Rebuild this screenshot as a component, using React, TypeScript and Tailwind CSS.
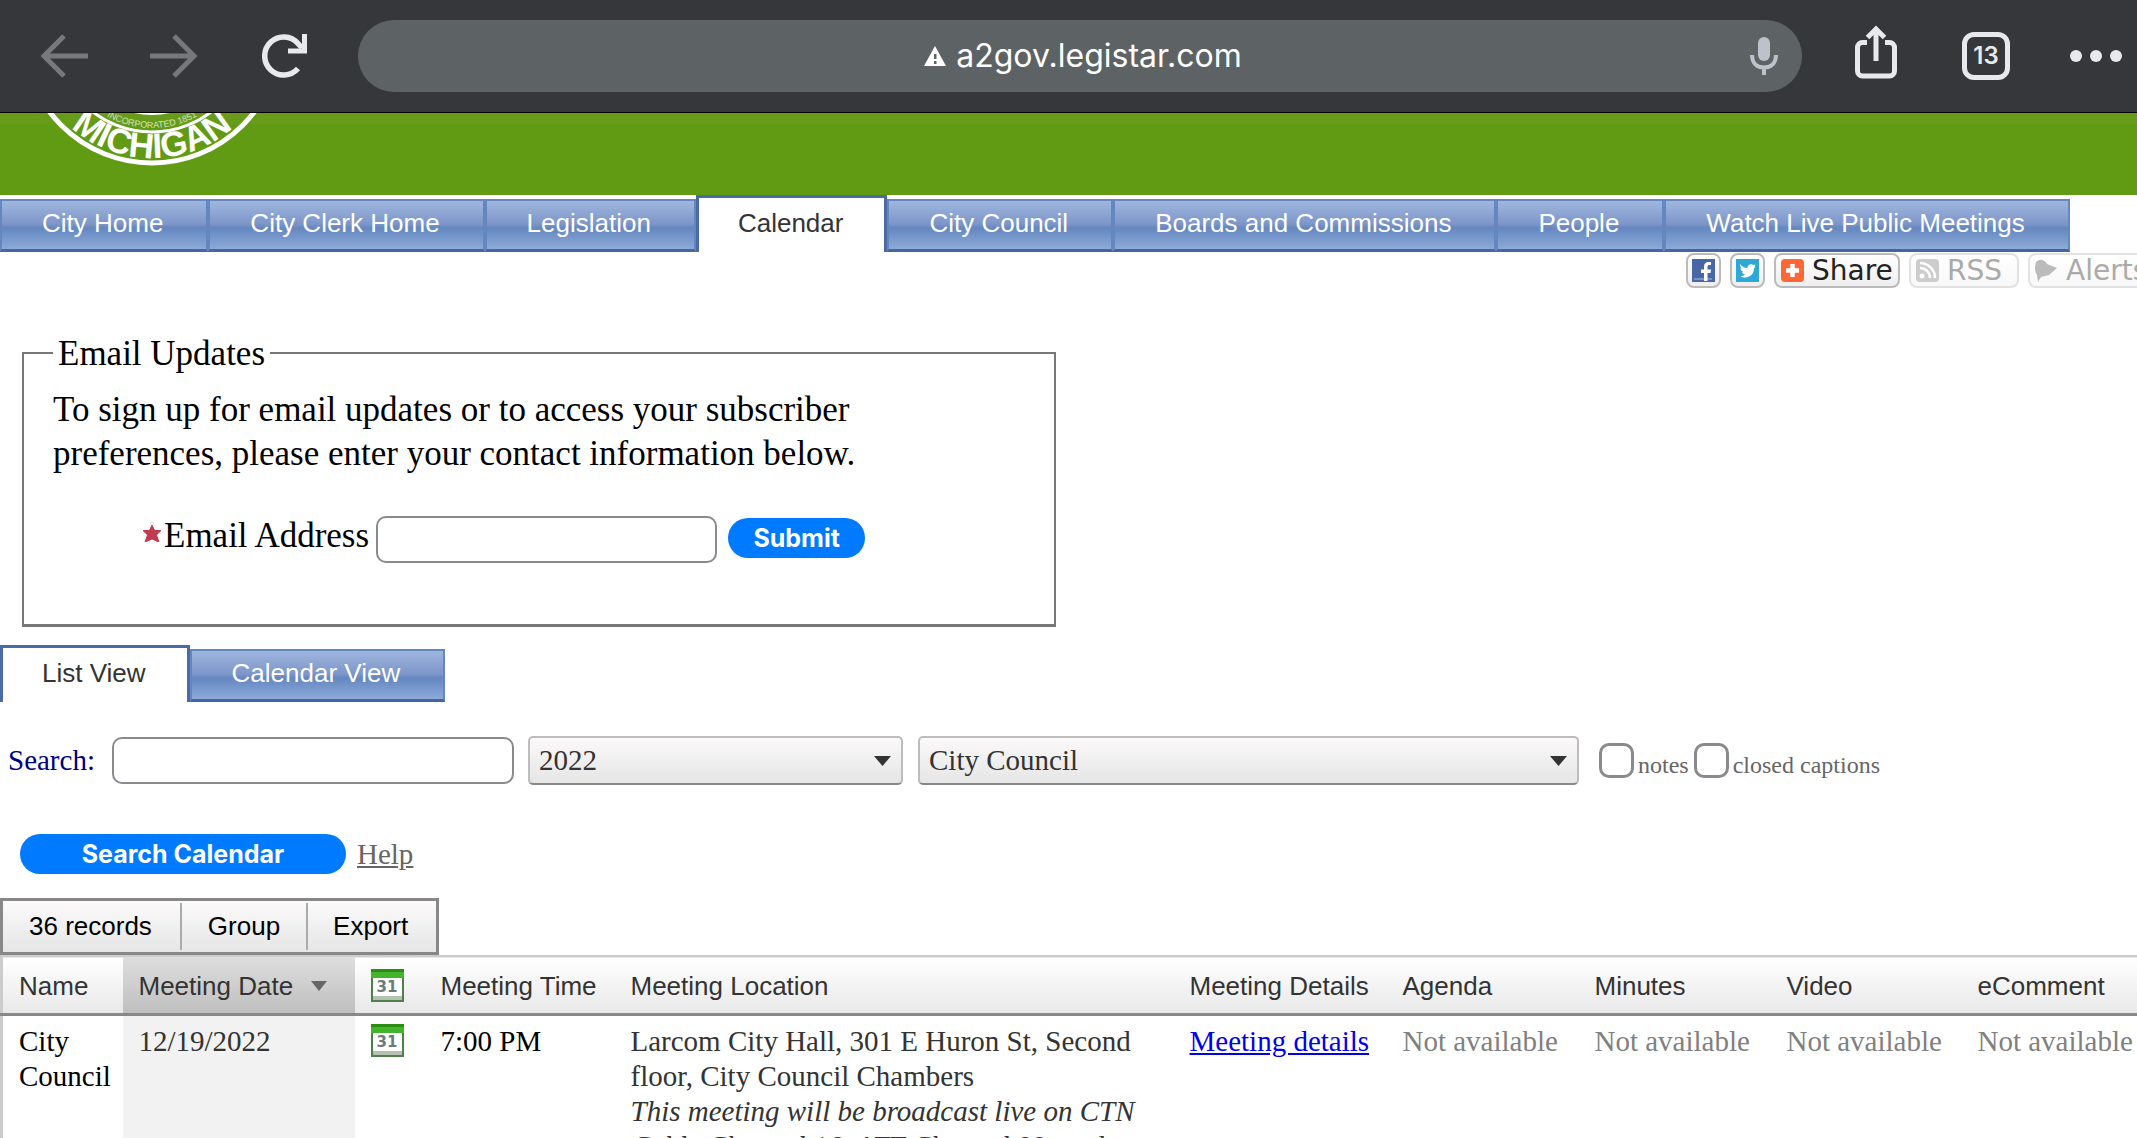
import { clsx } from "clsx";

const navTabs = [
  { label: "City Home" },
  { label: "City Clerk Home" },
  { label: "Legislation" },
  { label: "Calendar", active: true },
  { label: "City Council" },
  { label: "Boards and Commissions" },
  { label: "People" },
  { label: "Watch Live Public Meetings" },
];

const viewTabs = [
  { label: "List View", active: true },
  { label: "Calendar View" },
];

const sans = "font-['Liberation_Sans',Arial,sans-serif]";

function Tab({ label, active }: { label: string; active?: boolean }) {
  return (
    <a
      href="#"
      className={clsx(
        "block text-[26px] leading-[30px] whitespace-nowrap",
        active
          ? "border-x-3 border-t-3 border-[#4a6ba6] bg-white pt-[10px] pr-[41px] pb-[14px] pl-[39px] text-[#333]"
          : "mt-1 border-x-2 border-t-2 border-b-3 border-x-[#6587bf] border-t-[#6587bf] border-b-[#44659f] bg-[linear-gradient(#9fb6de,#7d96c9_48%,#6587c0_56%,#8cabd9)] pt-[7px] pr-[43px] pb-[11px] pl-[40px] text-white"
      )}
    >
      {label}
    </a>
  );
}

function BrowserBar() {
  return (
    <header className="flex h-[113px] items-center border-b border-black bg-[#36373b] pr-[15px] pl-[40px]">
      <button aria-label="Back" className="mr-[62px]">
        <svg width="48" height="44" viewBox="0 0 48 44" fill="none" stroke="#77787a" strokeWidth="5">
          <path d="M48 22H4M24 2L4 22l20 20" />
        </svg>
      </button>
      <button aria-label="Forward" className="mr-[64px]">
        <svg width="48" height="44" viewBox="0 0 48 44" fill="none" stroke="#77787a" strokeWidth="5">
          <path d="M0 22h44M24 2l20 20-20 20" />
        </svg>
      </button>
      <button aria-label="Reload" className="mr-[50px]">
        <svg width="46" height="46" viewBox="0 0 46 46" fill="none" stroke="#e8e9ee" strokeWidth="5.500">
          <path d="M36 35.500A19 19 0 1 1 36 10.500L40 15" />
          <path d="M42.500 1v17H26" strokeWidth="5" />
        </svg>
      </button>
      <div className="flex h-[72px] flex-1 items-center rounded-full bg-[#5d6265] pr-[24px] pl-[58px]">
        <div className="flex flex-1 items-center justify-center gap-[10px] text-white">
          <svg width="22" height="20" viewBox="0 0 22 20">
            <path d="M11 0l11 20H0z" fill="#fff" />
            <path d="M10 8h2.500v5H10zM10 15h2.500v3H10z" fill="#5d6265" />
          </svg>
          <span className="font-[Inter,Roboto,sans-serif] text-[32px] leading-[40px]">a2gov.legistar.com</span>
        </div>
        <button aria-label="Voice search">
          <svg width="28" height="38" viewBox="0 0 28 38" fill="none">
            <rect x="8" y="0" width="12" height="24" rx="6" fill="#bdc1c9" />
            <path d="M2 18c0 8 5 12.500 12 12.500S26 26 26 18M14 30v8" stroke="#bdc1c9" strokeWidth="4" />
          </svg>
        </button>
      </div>
      <button aria-label="Share page" className="mb-[8px] ml-[53px]">
        <svg width="42" height="54" viewBox="0 0 42 54" fill="none" stroke="#e8e9ee" strokeWidth="5">
          <path d="M12 17.500H7.500a5 5 0 0 0-5 5V46a5 5 0 0 0 5 5h27a5 5 0 0 0 5-5V22.500a5 5 0 0 0-5-5H30" />
          <path d="M21 36V4M12.500 12.500L21 4l8.500 8.500" />
        </svg>
      </button>
      <button
        aria-label="13 open tabs"
        className="ml-[65px] flex size-[48px] items-center justify-center rounded-[12px] border-5 border-[#e8e9ee] font-[Inter,sans-serif] text-[24px] font-semibold text-[#e8e9ee]"
      >
        13
      </button>
      <button aria-label="More" className="ml-[60px] flex gap-[8px]">
        <span className="size-[12px] rounded-full bg-[#e8e9ee]" />
        <span className="size-[12px] rounded-full bg-[#e8e9ee]" />
        <span className="size-[12px] rounded-full bg-[#e8e9ee]" />
      </button>
    </header>
  );
}

function Banner() {
  return (
    <div className="h-[82px] overflow-hidden bg-[linear-gradient(#669c1a_11px,#619a13_12px)] pl-[12px]">
      {/* bottom of the city seal, the rest is scrolled away */}
      <svg width="280" height="82" viewBox="12 113 280 82" fill="none">
        <circle cx="152" cy="35" r="128" stroke="#fff" strokeWidth="5" />
        <circle cx="152" cy="35" r="97" stroke="#fff" strokeWidth="3" />
        <circle cx="152" cy="35" r="79" stroke="#fff" strokeWidth="2" />
        <path id="sealOuter" d="M29 35A123 123 0 0 0 275 35" />
        <path id="sealInner" d="M59 35A93 93 0 0 0 245 35" />
        <g fill="#fff" textAnchor="middle" fontFamily="Liberation Sans, Arial, sans-serif">
          <text fontSize="35" fontWeight="700">
            <textPath href="#sealOuter" startOffset="50%">MICHIGAN</textPath>
          </text>
          <text fontSize="9" opacity="0.7">
            <textPath href="#sealInner" startOffset="50%">INCORPORATED 1851</textPath>
          </text>
        </g>
      </svg>
    </div>
  );
}

function ShareBar() {
  const pill = "flex h-[35px] items-center rounded-[8px] border-2 bg-linear-to-b from-white";
  return (
    <div className="mt-px flex h-[35px] justify-end gap-[9px] overflow-hidden font-['DejaVu_Sans',sans-serif] text-[28px] leading-[30px]">
      <a href="#" aria-label="Facebook" className={clsx(pill, "w-[35px] justify-center border-[#bbb] to-[#eee]")}>
        <svg width="23" height="23" viewBox="0 0 23 23">
          <path d="M0 0h23v23H0z" fill="#4767a8" />
          <path d="M2 20h18" stroke="#8ba0cb" strokeWidth="1.500" />
          <path d="M12 22v-8H9v-3.500h3V8c0-4 2-5.500 7-5V6c-3-.3-3.500.3-3.500 2v2.500H19L18.500 14h-3v8z" fill="#fff" />
        </svg>
      </a>
      <a href="#" aria-label="Twitter" className={clsx(pill, "w-[35px] justify-center border-[#bbb] to-[#eee]")}>
        <svg width="23" height="23" viewBox="0 0 23 23">
          <path d="M0 0h23v23H0z" fill="#2ca9d6" />
          <path
            d="M4 5c2 2.500 4.500 4 7.500 4-.5-3 3.500-5 6-3l2-.5-1 2 1 .3-1.500 1.500C18 15 14 18.500 9.500 18.500c-2 0-4-.5-5-1.500 2 0 3.500-.5 4.500-1.500-1.500-.3-2.500-1-3-2.500h1.500C5.500 12 4.500 11 4.500 9l1.500.5C4.500 8.500 3.500 6.500 4 5z"
            fill="#fff"
          />
        </svg>
      </a>
      <a href="#" className={clsx(pill, "w-[126px] gap-[8px] border-[#bbb] to-[#eee] pl-[5px] text-[#222]")}>
        <svg width="23" height="23" viewBox="0 0 23 23" className="shrink-0">
          <rect width="23" height="23" rx="4" fill="#ff6737" />
          <path d="M11.500 5v13M5 11.500h13" stroke="#fff" strokeWidth="4.500" />
        </svg>
        Share
      </a>
      <a href="#" className={clsx(pill, "w-[110px] gap-[8px] border-[#e2e2e2] to-[#f8f8f8] pl-[5px] text-[#aaa]")}>
        <svg width="23" height="23" viewBox="0 0 23 23" className="shrink-0" fill="none">
          <rect width="23" height="23" rx="4" fill="#ccc" />
          <path d="M4 9a10 10 0 0 1 10 10M4 4a15 15 0 0 1 15 15" stroke="#fff" strokeWidth="2.500" />
          <circle cx="6" cy="17" r="2.500" fill="#fff" />
        </svg>
        RSS
      </a>
      <a href="#" className={clsx(pill, "w-[109px] gap-[9px] overflow-hidden rounded-r-none border-r-0 border-[#e2e2e2] to-[#f8f8f8] pl-[5px] text-[#aaa]")}>
        <svg width="22" height="23" viewBox="0 0 22 23" className="shrink-0">
          <path d="M1 3c4-4 9-2 11 2l10 4-8 7-8 2-3 5-1-7C-1 11 0 7 1 3z" fill="#bbb" />
        </svg>
        Alerts
      </a>
    </div>
  );
}

function EmailUpdates() {
  return (
    <fieldset className="mt-[41px] ml-[22px] h-[298px] w-[1034px] max-w-full border-2 border-b-3 border-[#777] px-[29px]">
      <legend className="px-[5px] pt-[3px]">Email Updates</legend>
      <p className="mt-[12px] max-w-[900px]">
        To sign up for email updates or to access your subscriber preferences, please enter your contact information below.
      </p>
      <div className="mt-[36px] flex items-center pl-[90px]">
        <svg width="18" height="17" viewBox="0 0 18 17" className="mr-[3px] mb-[8px]">
          <path d="M9 0l2.500 5.500H18l-4.500 4.500L16 17l-7-3-7 3 2.500-7L0 5.500h6.500z" fill="#c23a50" stroke="#c23a50" />
        </svg>
        <label htmlFor="email" className="pb-[4px]">
          Email Address
        </label>
        <input id="email" type="email" className="mt-[4px] ml-[7px] h-[47px] w-[341px] rounded-[10px] border-2 border-[#8a8a8e] bg-white px-2" />
        <button className="ml-[11px] h-[40px] w-[137px] rounded-full bg-[#007aff] font-[Inter,sans-serif] text-[25px] leading-[40px] font-bold text-white">
          Submit
        </button>
      </div>
    </fieldset>
  );
}

function Dropdown({ label, value, width }: { label: string; value: string; width: string }) {
  return (
    <div className={clsx("relative", width)}>
      <select
        aria-label={label}
        className="h-[49px] w-full appearance-none rounded-[5px] border-2 border-[#bdbdbd] border-b-[#888] bg-linear-to-b from-[#fbf9fa] to-[#e6e6e6] px-[9px] text-[#333]"
      >
        <option>{value}</option>
      </select>
      <svg className="pointer-events-none absolute top-[20px] right-[12px]" width="17" height="10" viewBox="0 0 17 10">
        <path d="M0 0h17L8.500 10z" fill="#333" />
      </svg>
    </div>
  );
}

function SearchForm() {
  const box = "size-[35px] appearance-none rounded-[10px] border-3 border-[#8a8a8e] bg-white";
  return (
    <form className="text-[29px] leading-[35px]">
      <div className="mt-[34px] flex items-center">
        <label htmlFor="search" className="ml-[8px] w-[104px] text-[#000080]">
          Search:
        </label>
        <input id="search" className="h-[47px] w-[402px] rounded-[10px] border-2 border-[#8a8a8e] bg-white px-2" />
        <div className="ml-[14px] flex gap-[15px]">
          <Dropdown label="Year" value="2022" width="w-[375px]" />
          <Dropdown label="Department" value="City Council" width="w-[661px]" />
        </div>
        <div className="ml-[20px] flex items-center text-[24px] text-[#666]">
          <input id="notes" type="checkbox" className={box} />
          <label htmlFor="notes" className="mt-[10px] mr-[5px] ml-[4px]">
            notes
          </label>
          <input id="captions" type="checkbox" className={box} />
          <label htmlFor="captions" className="mt-[10px] ml-[4px]">
            closed captions
          </label>
        </div>
      </div>
      <div className="mt-[49px] ml-[20px] flex items-center gap-[11px]">
        <button type="button" className="h-[40px] w-[326px] rounded-full bg-[#007aff] font-[Inter,sans-serif] text-[25px] leading-[40px] font-bold text-white">
          Search Calendar
        </button>
        <a href="#" className="text-[#666] underline">
          Help
        </a>
      </div>
    </form>
  );
}

function CalendarIcon() {
  return (
    <svg width="33" height="33" viewBox="0 0 33 33">
      <path d="M0 0h33v33H0z" fill="#4f7f4a" />
      <path d="M0 0h33v9H0z" fill="#43b52c" />
      <path d="M0 0h33v3H0z" fill="#2b8d12" />
      <path d="M2 9h29v18H2z" fill="#fff" />
      <path d="M2 27h29v4H2z" fill="#b5c2b2" />
      <text x="16" y="23" textAnchor="middle" fontSize="15" fontWeight="700" fontFamily="DejaVu Sans, sans-serif" fill="#6b7b76">
        31
      </text>
    </svg>
  );
}

const unavailable = ["Agenda", "Minutes", "Video", "eComment"];

function MeetingTable() {
  const th = "border-b-3 border-[#888] pt-[2px] pl-[16px] font-normal";
  const td = "pt-[8px] pl-[16px]";
  return (
    <table className="w-full table-fixed border-collapse border-l-3 border-[#ccc] text-left">
      <colgroup>
        <col className="w-[121px]" />
        <col className="w-[232px]" />
        <col className="w-[70px]" />
        <col className="w-[190px]" />
        <col className="w-[559px]" />
        <col className="w-[213px]" />
        <col className="w-[192px]" />
        <col className="w-[192px]" />
        <col className="w-[191px]" />
        <col />
      </colgroup>
      <thead className={clsx(sans, "text-[26px] whitespace-nowrap text-[#333]")}>
        <tr className="h-[58px] border-t-2 border-[#ccc] bg-linear-to-b from-white to-[#e8e8e8]">
          <th className={th}>Name</th>
          <th className={clsx(th, "bg-linear-to-b from-[#dedede] to-[#bfbfbf]")}>
            <span className="flex items-center gap-[18px]">
              Meeting Date
              <svg width="16" height="10" viewBox="0 0 16 10">
                <path d="M0 0h16L8 10z" fill="#666" />
              </svg>
            </span>
          </th>
          <th className={th}>
            <CalendarIcon />
          </th>
          <th className={th}>Meeting Time</th>
          <th className={th}>Meeting Location</th>
          <th className={th}>Meeting Details</th>
          {unavailable.map((name) => (
            <th key={name} className={th}>
              {name}
            </th>
          ))}
        </tr>
      </thead>
      <tbody className="text-[29px] leading-[35px]">
        <tr className="align-top">
          <td className={td}>City Council</td>
          <td className={clsx(td, "bg-[#f2f2f2] text-[#333]")}>12/19/2022</td>
          <td className={td}>
            <CalendarIcon />
          </td>
          <td className={td}>7:00 PM</td>
          <td className={clsx(td, "pr-[30px] text-[#333]")}>
            Larcom City Hall, 301 E Huron St, Second floor, City Council Chambers
            <br />
            <em>This meeting will be broadcast live on CTN Cable Channel 16, ATT Channel 99, and</em>
          </td>
          <td className={td}>
            <a href="#" className="text-[#0000ee] underline">
              Meeting details
            </a>
          </td>
          {unavailable.map((name) => (
            <td key={name} className={clsx(td, "whitespace-nowrap text-[#808080]")}>
              Not available
            </td>
          ))}
        </tr>
      </tbody>
    </table>
  );
}

export default function App() {
  return (
    <div className="h-screen overflow-hidden bg-white font-['Liberation_Serif','Times_New_Roman',serif] text-[35px] leading-[44px] text-black">
      <BrowserBar />
      <Banner />
      <nav className={clsx(sans, "flex")}>
        {navTabs.map((tab) => (
          <Tab key={tab.label} {...tab} />
        ))}
      </nav>
      <ShareBar />
      <EmailUpdates />
      <nav className={clsx(sans, "mt-[18px] flex")}>
        {viewTabs.map((tab) => (
          <Tab key={tab.label} {...tab} />
        ))}
      </nav>
      <SearchForm />
      <div className={clsx(sans, "mt-[24px] flex w-fit items-center border-3 border-[#888] bg-linear-to-b from-[#fcfafb] to-[#e6e6e6] py-[2px] text-[26px] leading-[30px]")}>
        <button className="h-[47px] pr-[28px] pb-[2px] pl-[26px]">36 records</button>
        <button className="h-[47px] border-l-2 border-[#aaa] px-[26px] pb-[2px]">Group</button>
        <button className="h-[47px] border-l-2 border-[#aaa] pr-[28px] pb-[2px] pl-[25px]">Export</button>
      </div>
      <MeetingTable />
    </div>
  );
}
